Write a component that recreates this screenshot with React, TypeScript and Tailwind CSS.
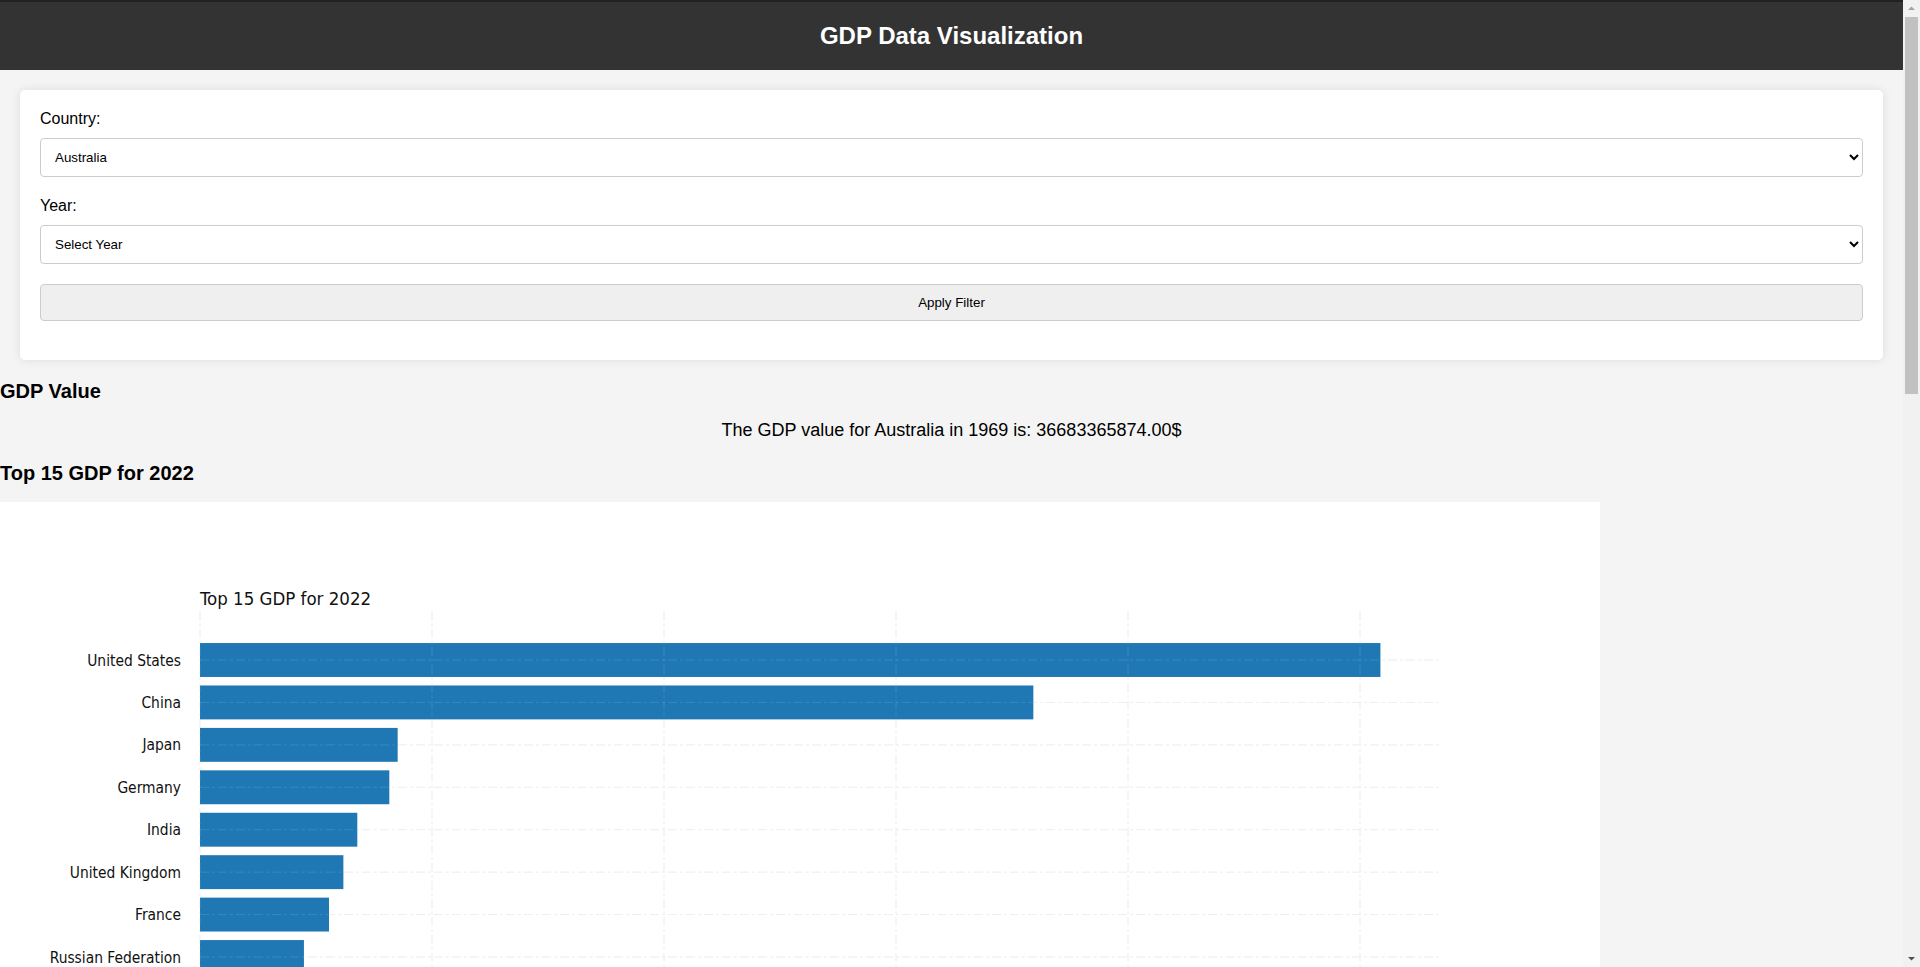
import { useState } from "react";

const countries = [
  "Australia",
  "Brazil",
  "Canada",
  "China",
  "France",
  "Germany",
  "India",
  "Italy",
  "Japan",
  "Mexico",
  "Spain",
  "United Kingdom",
  "United States",
];

// 2022 GDP in trillions of USD
const top15 = [
  { name: "United States", value: 25.44 },
  { name: "China", value: 17.96 },
  { name: "Japan", value: 4.26 },
  { name: "Germany", value: 4.08 },
  { name: "India", value: 3.39 },
  { name: "United Kingdom", value: 3.09 },
  { name: "France", value: 2.78 },
  { name: "Russian Federation", value: 2.24 },
  { name: "Canada", value: 2.14 },
  { name: "Italy", value: 2.05 },
  { name: "Brazil", value: 1.92 },
  { name: "Australia", value: 1.69 },
  { name: "Korea, Rep.", value: 1.67 },
  { name: "Spain", value: 1.42 },
  { name: "Mexico", value: 1.41 },
];

function GdpChart() {
  const x0 = 200;
  const xRight = 1439;
  const perT = 46.4;
  const top = 109;
  const bottom = 800;
  const rowY = (i: number) => 158 + i * 42.43;
  const barH = 33.9;
  const ticks = [0, 5, 10, 15, 20, 25];

  return (
    <svg
      width="1600"
      height="880"
      className="block"
      style={{ fontFamily: '"DejaVu Sans Condensed", "DejaVu Sans", sans-serif', fontStretch: "condensed" }}
    >
      <rect width="1600" height="880" fill="#ffffff" />
      <text x={x0} y="103" fontSize="18.5" fill="#111">Top 15 GDP for 2022</text>

      {/* grid under bars */}
      {ticks.map((t) => (
        <line key={"v" + t} x1={x0 + t * perT} x2={x0 + t * perT} y1={top} y2={bottom} stroke="#ececec" strokeDasharray="9,3,3,3" />
      ))}
      {top15.map((c, i) => (
        <line key={"h" + i} x1={x0} x2={xRight} y1={rowY(i)} y2={rowY(i)} stroke="#ececec" strokeDasharray="9,3,3,3" />
      ))}

      {top15.map((c, i) => (
        <rect key={c.name} x={x0} y={rowY(i) - barH / 2} width={c.value * perT} height={barH} fill="#1f77b4" />
      ))}

      {/* faint grid over bars */}
      {ticks.map((t) => (
        <line key={"vo" + t} x1={x0 + t * perT} x2={x0 + t * perT} y1={top} y2={bottom} stroke="#ffffff" strokeOpacity="0.12" strokeDasharray="9,3,3,3" />
      ))}
      {top15.map((c, i) => (
        <line key={"ho" + i} x1={x0} x2={xRight} y1={rowY(i)} y2={rowY(i)} stroke="#ffffff" strokeOpacity="0.12" strokeDasharray="9,3,3,3" />
      ))}

      {top15.map((c, i) => (
        <text key={"l" + c.name} x="181" y={rowY(i) + 5.5} fontSize="15.4" textAnchor="end" fill="#111">
          {c.name}
        </text>
      ))}

      {ticks.map((t) => (
        <text key={"t" + t} x={x0 + t * perT} y={bottom + 20} fontSize="15" textAnchor="middle" fill="#111">
          {t === 0 ? "0" : t + "T"}
        </text>
      ))}
      <text x={(x0 + xRight) / 2} y={bottom + 52} fontSize="16" textAnchor="middle" fill="#111">GDP</text>
    </svg>
  );
}

// browser scrollbar as seen in the screenshot
function Scrollbar() {
  return (
    <div className="fixed top-0 right-0 w-[17px] h-screen bg-[#f1f1f1]">
      <svg width="17" height="17" className="absolute top-0 left-0">
        <path d="M5 10 L8.5 6.5 L12 10 Z" fill="#a3a3a3" />
      </svg>
      <div className="absolute left-[2px] right-[2px] top-[17px] h-[377px] bg-[#c1c1c1]"></div>
      <svg width="17" height="17" className="absolute bottom-0 left-0">
        <path d="M5 7 L8.5 10.5 L12 7 Z" fill="#505050" />
      </svg>
    </div>
  );
}

export default function App() {
    const [country, setCountry] = useState("Australia");
    const [year, setYear] = useState("");

    return (
        <div className="min-h-screen bg-[#f4f4f4] text-black font-['Liberation_Sans',Arial,sans-serif]">
            <div className="mr-[17px]">
                {/* Header */}
                <header className="h-[70px] bg-[#333333] border-t-2 border-[#222222] flex items-center justify-center">
                    <h1 className="text-white text-[24px] font-bold">GDP Data Visualization</h1>
                </header>

                {/* Filter card */}
                <div className="mx-5 mt-5 bg-white rounded-[5px] shadow-[0_0_10px_rgba(0,0,0,0.1)] px-5 pt-5 pb-[39px]">
                    <label className="block text-[16px] leading-[18px]">Country:</label>
                    <select
                        value={country}
                        onChange={(e) => setCountry(e.target.value)}
                        className="mt-[10px] w-full h-[39px] px-[10px] text-[13.33px] bg-white border border-[#cccccc] rounded-[4px] font-['Liberation_Sans',Arial,sans-serif]"
                    >
                        {countries.map((c) => (
                            <option key={c} value={c}>{c}</option>
                        ))}
                    </select>

                    <label className="block mt-5 text-[16px] leading-[18px]">Year:</label>
                    <select
                        value={year}
                        onChange={(e) => setYear(e.target.value)}
                        className="mt-[10px] w-full h-[39px] px-[10px] text-[13.33px] bg-white border border-[#cccccc] rounded-[4px] font-['Liberation_Sans',Arial,sans-serif]"
                    >
                        <option value="">Select Year</option>
                        {Array.from({ length: 63 }, (_, i) => 1960 + i).map((y) => (
                            <option key={y} value={y}>{y}</option>
                        ))}
                    </select>

                    <button className="mt-5 w-full h-[37px] bg-[#efefef] border border-[#cccccc] rounded-[4px] text-[13.33px] font-['Liberation_Sans',Arial,sans-serif]">
                        Apply Filter
                    </button>
                </div>

                {/* GDP value */}
                <h2 className="mt-5 text-[20px] leading-[23px] font-bold">GDP Value</h2>
                <p className="mt-[17px] text-[18px] leading-[21px] text-center">
                    The GDP value for Australia in 1969 is: 36683365874.00$
                </p>

                {/* Top 15 chart */}
                <h2 className="mt-[21px] text-[20px] leading-[23px] font-bold">Top 15 GDP for 2022</h2>
                <div className="mt-[17px] w-[1600px] bg-white">
                    <GdpChart />
                </div>
                <div className="h-[60px]"></div>
            </div>
            <Scrollbar />
        </div>
    );
}
